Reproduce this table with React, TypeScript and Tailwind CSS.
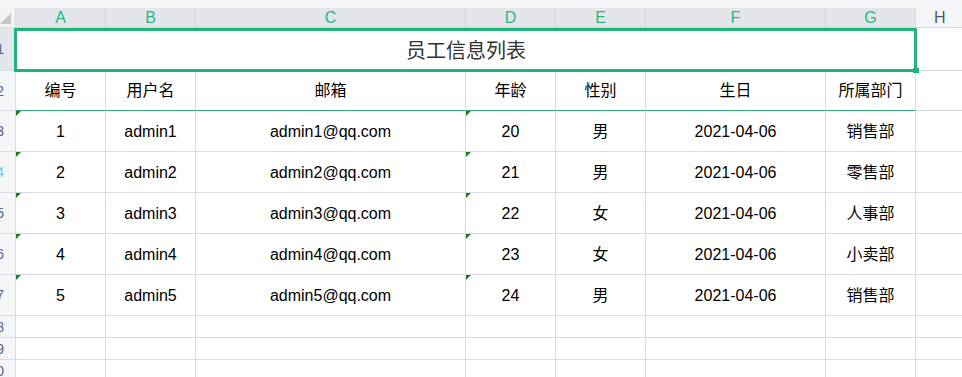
import React from "react";

const cols = [90, 90, 270, 90, 90, 180, 90];
const letters = ["A", "B", "C", "D", "E", "F", "G"];
const headers = ["编号", "用户名", "邮箱", "年龄", "性别", "生日", "所属部门"];
const rows = [
  ["1", "admin1", "admin1@qq.com", "20", "男", "2021-04-06", "销售部"],
  ["2", "admin2", "admin2@qq.com", "21", "男", "2021-04-06", "零售部"],
  ["3", "admin3", "admin3@qq.com", "22", "女", "2021-04-06", "人事部"],
  ["4", "admin4", "admin4@qq.com", "23", "女", "2021-04-06", "小卖部"],
  ["5", "admin5", "admin5@qq.com", "24", "男", "2021-04-06", "销售部"],
];

const FONT = { fontFamily: '"Liberation Sans", "Noto Sans CJK SC", sans-serif' };

function RowHead({ n, selected, highlight }: { n: string; selected?: boolean; highlight?: boolean }) {
  return (
    <div
      className={`w-[16px] shrink-0 border-r border-b border-[#d6dce5] overflow-hidden flex items-center justify-end ${
        selected ? "bg-[#e4e5ea]" : "bg-[#f5f6f8]"
      }`}
    >
      <span
        className={`text-[14px] leading-none mr-[11px] ${highlight ? "text-[#6cc4f2]" : "text-[#52648a]"}`}
      >
        {n}
      </span>
    </div>
  );
}

function Tri() {
  return (
    <div className="absolute left-0 top-0 w-[5px] h-[5px] bg-[#1a7d1a] [clip-path:polygon(0_0,100%_0,0_100%)]" />
  );
}

export default function App() {
  return (
    <div className="w-[962px] h-[377px] overflow-hidden bg-white text-black" style={FONT}>
      <div className="h-[8px] bg-[#f5f6f8]" />
      {/* column header */}
      <div className="flex h-[20px]">
        <div className="w-[16px] shrink-0 bg-[#f1f2f4] border-r border-b border-[#d6dce5] relative">
          <svg width="12" height="12" viewBox="0 0 12 12" className="absolute left-0 top-[5px]">
            <polygon points="11,0 11,11 0,11" fill="#c4c6ca" />
          </svg>
        </div>
        {cols.map((w, i) => (
          <div
            key={i}
            style={{ width: w }}
            className="shrink-0 bg-[#e4e5ea] border-r border-b border-[#d3d6dd] flex items-end justify-center pb-[1px] text-[16px] leading-none text-[#25b87d]"
          >
            {letters[i]}
          </div>
        ))}
        <div className="flex-1 bg-[#f5f6f8] border-b border-[#d6dce5] pl-[18px] flex items-end pb-[1px] text-[16px] leading-none text-[#4a5a78]">
          H
        </div>
      </div>
      {/* row 1 title */}
      <div className="flex h-[43px]">
        <RowHead n="1" selected />
        <div className="w-[900px] shrink-0 relative flex items-center justify-center text-[20px] text-[#333] border-b border-[#d6dce5]">
          <span className="mt-[4px]">员工信息列表</span>
          <div className="absolute -left-[2px] top-0 w-[903px] h-[44px] border-[3px] border-[#1fb57a] z-10" />
          <div className="absolute left-[897px] top-[40px] w-[6px] h-[5px] bg-[#1fb57a] z-20" />
        </div>
        <div className="flex-1 border-b border-l border-[#d6dce5]" />
      </div>
      {/* row 2 headers */}
      <div className="flex h-[40px]">
        <RowHead n="2" />
        {cols.map((w, i) => (
          <div
            key={i}
            style={{ width: w }}
            className="shrink-0 border-r border-r-[#d6dce5] border-b border-b-[#36a874] flex items-center justify-center text-[16px]"
          >
            {headers[i]}
          </div>
        ))}
        <div className="flex-1 border-b border-[#d6dce5]" />
      </div>
      {rows.map((r, ri) => (
        <div key={ri} className="flex h-[41px]">
          <RowHead n={String(ri + 3)} highlight={ri === 1} />
          {cols.map((w, i) => (
            <div
              key={i}
              style={{ width: w }}
              className="shrink-0 relative border-r border-b border-[#d6dce5] flex items-center justify-center pt-[2px] text-[16px]"
            >
              {(i === 0 || i === 3) && <Tri />}
              {r[i]}
            </div>
          ))}
          <div className="flex-1 border-b border-[#d6dce5]" />
        </div>
      ))}
      {["8", "9", "10"].map((n) => (
        <div key={n} className="flex h-[22px]">
          <RowHead n={n} />
          {cols.map((w, i) => (
            <div key={i} style={{ width: w }} className="shrink-0 border-r border-b border-[#d6dce5]" />
          ))}
          <div className="flex-1 border-b border-[#d6dce5]" />
        </div>
      ))}
    </div>
  );
}
